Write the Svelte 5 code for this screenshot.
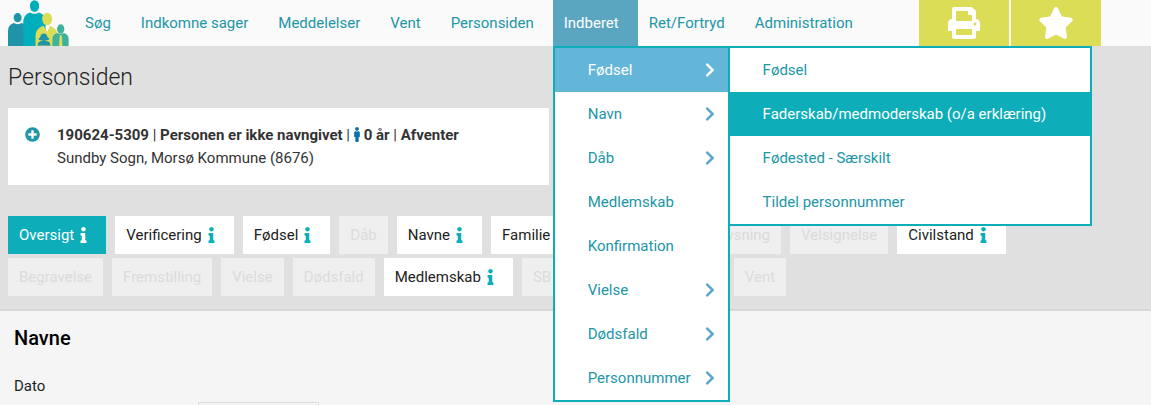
<script>
  const nav = ["Søg", "Indkomne sager", "Meddelelser", "Vent", "Personsiden", "Indberet", "Ret/Fortryd", "Administration"];

  const menu = [
    { label: "Fødsel", sub: true },
    { label: "Navn", sub: true },
    { label: "Dåb", sub: true },
    { label: "Medlemskab" },
    { label: "Konfirmation" },
    { label: "Vielse", sub: true },
    { label: "Dødsfald", sub: true },
    { label: "Personnummer", sub: true },
  ];

  const submenu = ["Fødsel", "Faderskab/medmoderskab (o/a erklæring)", "Fødested - Særskilt", "Tildel personnummer"];

  const tabs = [
    [
      { label: "Oversigt", info: true },
      { label: "Verificering", info: true },
      { label: "Fødsel", info: true },
      { label: "Dåb" },
      { label: "Navne", info: true },
      { label: "Familie", info: true },
      { label: "Konfirmation" },
      { label: "Lysning" },
      { label: "Velsignelse" },
      { label: "Civilstand", info: true },
    ],
    [
      { label: "Begravelse" },
      { label: "Fremstilling" },
      { label: "Vielse" },
      { label: "Dødsfald" },
      { label: "Medlemskab", info: true },
      { label: "SB sag" },
      { label: "Sagshistorik", info: true },
      { label: "Vent" },
    ],
  ];

  let openItem = $state("Indberet");
  let openSub = $state("Fødsel");
  let activeSub = $state("Faderskab/medmoderskab (o/a erklæring)");
  let activeTab = $state("Oversigt");
</script>

{#snippet infoIcon()}
  <svg class="info" viewBox="0 0 192 512" aria-hidden="true"><path d="M20 424.229h20V279.771H20c-11.046 0-20-8.954-20-20V212c0-11.046 8.954-20 20-20h112c11.046 0 20 8.954 20 20v212.229h20c11.046 0 20 8.954 20 20V492c0 11.046-8.954 20-20 20H20c-11.046 0-20-8.954-20-20v-47.771c0-11.046 8.954-20 20-20zM96 0C56.235 0 24 32.235 24 72s32.235 72 72 72 72-32.235 72-72S135.764 0 96 0z"/></svg>
{/snippet}

<div class="page">
  <header class="topbar">
    <a class="logo" href="#forside" aria-label="Forside">
      <svg viewBox="24 0 184 138">
        <g fill="#1f94a8">
          <ellipse cx="53" cy="53" rx="12" ry="14" />
          <path d="M24 138V92q0-17 17-23 12 7 25 0 14 5 14 20v49z" />
        </g>
        <g fill="#00adba">
          <ellipse cx="104" cy="18" rx="14" ry="18" />
          <path d="M70 138V66q0-22 20-29 14 8 28 0 20 7 20 29v72z" />
        </g>
        <g fill="#dcdd56">
          <path d="M107 138v-28q0-26 24-33l11 18 8-18q24 8 24 32v29z" />
          <ellipse cx="142" cy="57" rx="15" ry="19" />
        </g>
        <path d="M136 78l6 20 8-20q-7 4-14 0z" fill="#fafafa" />
        <path d="M112 138q0-14 12-16h16q13 2 13 16z" fill="#1f94a8" stroke="#dcdd56" stroke-width="2" />
        <path d="M116 116q6-1 6-8 2-7 10-7t10 7q1 7 7 8l-3 4h-6q-8 6-16 0h-6z" fill="#1f94a8" />
        <path d="M158 138v-20q0-15 14-19 11 5 21 0 14 4 14 19v20z" fill="#3eb39c" />
        <ellipse cx="183" cy="87" rx="11" ry="14" fill="#3eb39c" />
        <path d="M180 106h6l2 32h-10z" fill="#dcdd56" />
      </svg>
    </a>

    <nav>
      <ul class="nav">
        {#each nav as item}
          <li class:open={item === openItem}>
            <button class="nav-link" onclick={() => (openItem = item)}>{item}</button>
            {#if item === "Indberet" && openItem === item}
              <ul class="dropdown">
                {#each menu as entry}
                  <li class:open={entry.label === openSub}>
                    <button class="entry" onclick={() => (openSub = entry.label)}>
                      {entry.label}
                      {#if entry.sub}
                        <svg class="chevron" viewBox="0 0 320 512" aria-hidden="true"><path d="M285.476 272.971L91.132 467.314c-9.373 9.373-24.569 9.373-33.941 0l-22.667-22.667c-9.357-9.357-9.375-24.522-.04-33.901L188.505 256 34.484 101.255c-9.335-9.379-9.317-24.544.04-33.901l22.667-22.667c9.373-9.373 24.569-9.373 33.941 0L285.475 239.03c9.373 9.372 9.373 24.568.001 33.941z"/></svg>
                      {/if}
                    </button>
                    {#if entry.label === "Fødsel" && openSub === entry.label}
                      <ul class="dropdown sub">
                        {#each submenu as subEntry}
                          <li class:active={subEntry === activeSub}>
                            <button class="entry" onclick={() => (activeSub = subEntry)}>{subEntry}</button>
                          </li>
                        {/each}
                      </ul>
                    {/if}
                  </li>
                {/each}
              </ul>
            {/if}
          </li>
        {/each}
      </ul>
    </nav>

    <div class="tools">
      <button aria-label="Udskriv">
        <svg viewBox="0 0 512 512"><path d="M448 192V77.25c0-8.49-3.37-16.62-9.37-22.63L393.37 9.37c-6-6-14.14-9.37-22.63-9.37H96C78.33 0 64 14.33 64 32v160c-35.35 0-64 28.65-64 64v112c0 8.84 7.16 16 16 16h48v96c0 17.67 14.33 32 32 32h320c17.67 0 32-14.33 32-32v-96h48c8.84 0 16-7.16 16-16V256c0-35.35-28.65-64-64-64zm-64 256H128v-96h256v96zm0-224H128V64h192v48c0 8.84 7.16 16 16 16h48v96zm48 72c-13.25 0-24-10.75-24-24 0-13.26 10.75-24 24-24s24 10.74 24 24c0 13.25-10.75 24-24 24z"/></svg>
      </button>
      <button aria-label="Favorit">
        <svg viewBox="0 0 576 512"><path d="M259.3 17.8L194 150.2 47.9 171.5c-26.2 3.8-36.7 36.1-17.7 54.6l105.7 103-25 145.5c-4.5 26.3 23.2 46 46.4 33.7L288 439.6l130.7 68.7c23.2 12.2 50.9-7.4 46.4-33.7l-25-145.5 105.7-103c19-18.5 8.5-50.8-17.7-54.6L382 150.2 316.7 17.8c-11.7-23.6-45.6-23.9-57.4 0z"/></svg>
      </button>
    </div>
  </header>

  <main>
    <section class="person">
      <h1>Personsiden</h1>
      <div class="card">
        <button class="expand" aria-label="Vis mere">
          <svg viewBox="0 0 512 512"><path d="M256 8C119 8 8 119 8 256s111 248 248 248 248-111 248-248S393 8 256 8zm144 276c0 6.6-5.4 12-12 12h-92v92c0 6.6-5.4 12-12 12h-56c-6.6 0-12-5.4-12-12v-92h-92c-6.6 0-12-5.4-12-12v-56c0-6.6 5.4-12 12-12h92v-92c0-6.6 5.4-12 12-12h56c6.6 0 12 5.4 12 12v92h92c6.6 0 12 5.4 12 12v56z"/></svg>
        </button>
        <div>
          <div><b>190624-5309</b> | <b>Personen er ikke navngivet</b> | <svg class="male" viewBox="0 0 192 512" aria-hidden="true"><path d="M96 0c35.346 0 64 28.654 64 64s-28.654 64-64 64-64-28.654-64-64S60.654 0 96 0m48 144h-11.36c-22.711 10.443-49.59 10.894-73.28 0H48c-26.51 0-48 21.49-48 48v136c0 13.255 10.745 24 24 24h16v136c0 13.255 10.745 24 24 24h64c13.255 0 24-10.745 24-24V352h16c13.255 0 24-10.745 24-24V192c0-26.51-21.49-48-48-48z"/></svg><b>0 år</b> | <b>Afventer</b></div>
          <div>Sundby Sogn, Morsø Kommune (8676)</div>
        </div>
      </div>

      <div class="tabs">
        {#each tabs as row}
          <div class="tab-row">
            {#each row as tab}
              <button
                class="tab"
                class:has-info={tab.info}
                class:active={tab.label === activeTab}
                disabled={!tab.info}
                onclick={() => (activeTab = tab.label)}
              >
                {tab.label}
                {#if tab.info}{@render infoIcon()}{/if}
              </button>
            {/each}
          </div>
        {/each}
      </div>
    </section>

    <section class="names">
      <h2>Navne</h2>
      <div class="field">
        <label for="dato">Dato</label>
        <input id="dato" type="text" />
      </div>
    </section>
  </main>
</div>

<style>
  :global(body) {
    background-color: #f5f5f5;
  }

  .page {
    height: 100vh;
    overflow: hidden;
    font-family: Roboto, "Liberation Sans", sans-serif;
    font-size: 15px;
    line-height: 23px;
    color: #222;
  }

  button {
    font: inherit;
    color: inherit;
    border: 0;
    margin: 0;
    padding: 0;
    background: none;
    cursor: pointer;
  }

  svg {
    display: block;
    fill: currentColor;
  }

  ul {
    list-style: none;
    margin: 0;
    padding: 0;
  }

  .topbar {
    display: flex;
    height: 46px;
    padding: 0 50px 0 8px;
    background-color: #fafafa;
    color: #2196a6;
  }

  .logo {
    margin-right: 5px;
  }

  .logo svg {
    width: 61px;
    height: 46px;
  }

  .nav {
    display: flex;
  }

  .nav > li {
    position: relative;
  }

  .nav > li.open {
    background-color: #5aa6c0;
  }

  .nav-link {
    height: 46px;
    padding: 0 19px 0 11px;
    white-space: nowrap;
  }

  .open > .nav-link {
    color: #fff;
  }

  .dropdown {
    position: absolute;
    top: 100%;
    left: 0;
    z-index: 10;
    background-color: #fff;
    border: 2px solid #0dadba;
  }

  .dropdown > li {
    position: relative;
  }

  .dropdown > li.open {
    background-color: #64b6d8;
  }

  .dropdown > li.active {
    background-color: #0dadba;
  }

  .open > .entry,
  .active > .entry {
    color: #fff;
  }

  .entry {
    display: flex;
    justify-content: space-between;
    align-items: center;
    gap: 14px;
    width: 100%;
    height: 44px;
    padding: 0 13px 0 33px;
    text-align: left;
    white-space: nowrap;
  }

  .chevron {
    width: 10px;
    height: 16px;
    color: #5aa6c8;
  }

  .open > .entry .chevron {
    color: #fff;
  }

  .sub {
    top: -2px;
    left: 100%;
  }

  .sub .entry {
    padding: 0 44px 0 33px;
  }

  .tools {
    display: flex;
    gap: 2px;
    margin-left: auto;
  }

  .tools button {
    width: 90px;
    background-color: #dcdd56;
    color: #fff;
  }

  .tools svg {
    height: 32px;
    margin: 0 auto;
  }

  .person {
    padding: 19px 8px 13px;
    background-color: #e0e0e0;
    border-bottom: 2px solid #d8d8d8;
  }

  h1 {
    margin: 0 0 17px;
    font-size: 23px;
    font-weight: 300;
    line-height: 26px;
  }

  .card {
    display: flex;
    gap: 17px;
    width: 47vw;
    box-sizing: border-box;
    padding: 16px 17px 15px;
    background-color: #fff;
    color: #333;
    white-space: nowrap;
  }

  .expand {
    align-self: flex-start;
    margin-top: 3px;
    color: #2196a6;
  }

  .expand svg {
    width: 15px;
    height: 15px;
  }

  .male {
    display: inline-block;
    width: 6px;
    height: 15px;
    margin-right: 4px;
    vertical-align: -2px;
    color: #0a70a8;
  }

  .tabs {
    display: flex;
    flex-direction: column;
    gap: 4px;
    margin-top: 31px;
  }

  .tab-row {
    display: flex;
    gap: 9px;
  }

  .tab {
    display: flex;
    align-items: center;
    gap: 6px;
    height: 38px;
    padding: 0 11px;
    background-color: #fff;
    white-space: nowrap;
  }

  .tab.has-info {
    padding-right: 19px;
  }

  .tab:disabled {
    background-color: #efefef;
    color: #dbdbdb;
    cursor: default;
  }

  .tab.active {
    background-color: #0dadba;
    color: #fff;
  }

  .info {
    height: 16px;
    width: 7px;
    color: #0dadba;
  }

  .active .info {
    color: #fff;
  }

  .names {
    padding: 15px 14px;
  }

  h2 {
    margin: 0 0 24px;
    font-size: 20px;
    font-weight: 500;
    line-height: 25px;
    color: #000;
  }

  .field {
    display: grid;
    grid-template-columns: 184px 121px;
    align-items: start;
  }

  .field input {
    height: 32px;
    margin-top: 27px;
    box-sizing: border-box;
    border: 1px solid #ddd;
    background-color: #f5f5f5;
    font: inherit;
  }
</style>
